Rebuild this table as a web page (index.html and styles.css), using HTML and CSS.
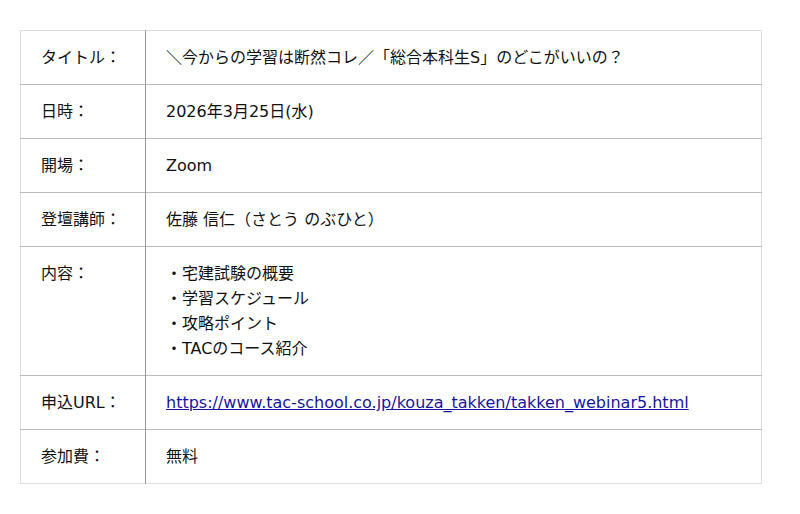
FILE: index.html
```html
<!DOCTYPE html>
<html>
<head>
<meta charset="utf-8">
<title>セミナー情報</title>
<link rel="stylesheet" href="styles.css">
</head>
<body>
<div class="innercontent">
	<table class="info-table">
		<tr>
			<th>タイトル：</th>
			<td>＼今からの学習は断然コレ／「総合本科生S」のどこがいいの？</td>
		</tr>
		<tr>
			<th>日時：</th>
			<td>2026年3月25日(水)</td>
		</tr>
		<tr>
			<th>開場：</th>
			<td>Zoom</td>
		</tr>
		<tr>
			<th>登壇講師：</th>
			<td>佐藤 信仁（さとう のぶひと）</td>
		</tr>
		<tr>
			<th>内容：</th>
			<td>・宅建試験の概要<br>・学習スケジュール<br>・攻略ポイント<br>・TACのコース紹介</td>
		</tr>
		<tr>
			<th>申込URL：</th>
			<td><a href="https://www.tac-school.co.jp/kouza_takken/takken_webinar5.html">https://www.tac-school.co.jp/kouza_takken/takken_webinar5.html</a></td>
		</tr>
		<tr>
			<th>参加費：</th>
			<td>無料</td>
		</tr>
	</table>
</div>
</body>
</html>
```

FILE: styles.css
```css
body{
color: #111;
font-family: "DejaVu Sans", "Noto Sans CJK JP", sans-serif;
font-size: 16px;
background: #FFF;
margin:0;
}
.innercontent{
padding: 30px 38px 0 20px;
}
.info-table {
width: 742px;
border-collapse: collapse;
border: 1px solid #DDD;
}
.info-table th,
.info-table td {
padding: 14px 20px;
line-height: 25px;
text-align: left;
vertical-align: top;
border-top: 1px solid #BBB;
}
.info-table tr:first-child th,
.info-table tr:first-child td {
border-top: 1px solid #DDD;
}
.info-table th {
width: 84px;
font-weight: normal;
border-right: 1px solid #999;
}
.info-table a {
color: #1515A0;
}
```
